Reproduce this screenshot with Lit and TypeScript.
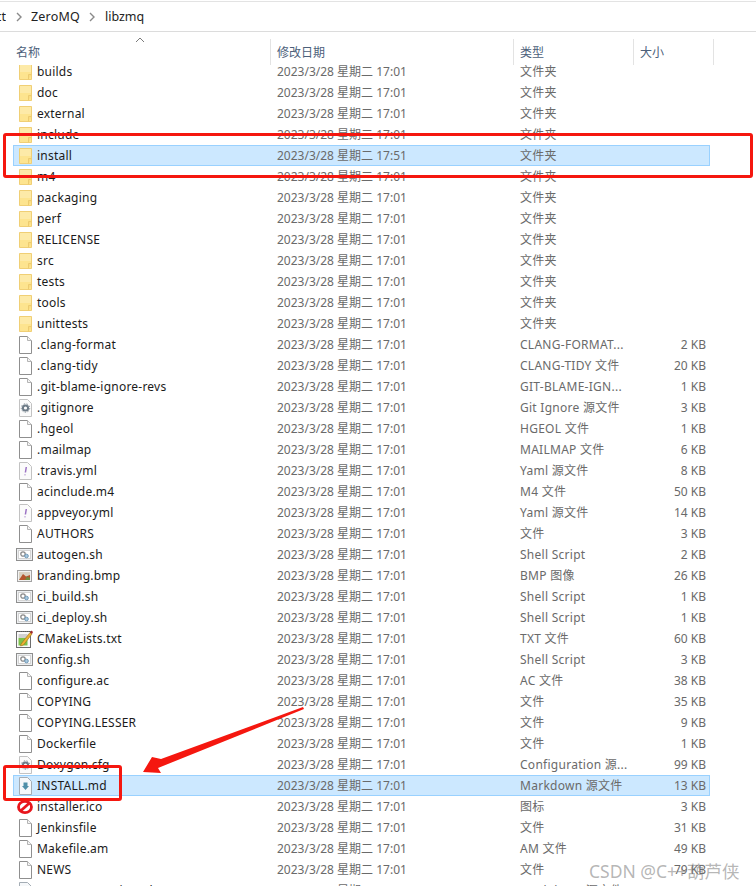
import { LitElement, html, css, svg } from "lit";
import { customElement } from "lit/decorators.js";

type Kind = "folder" | "file" | "gear" | "yml" | "sh" | "bmp" | "txt" | "md" | "ico";
interface Row { n: string; t: string; s?: string; k: Kind; d?: string; sel?: boolean; }

const F = "文件夹";
const SH = "Shell Script";
const rows: Row[] = [
  ...["builds", "doc", "external", "include"].map((n) => ({ n, t: F, k: "folder" as Kind })),
  { n: "install", t: F, k: "folder", d: "17:51", sel: true },
  ...["m4", "packaging", "perf", "RELICENSE", "src", "tests", "tools", "unittests"].map((n) => ({ n, t: F, k: "folder" as Kind })),
  { n: ".clang-format", t: "CLANG-FORMAT...", s: "2 KB", k: "file" },
  { n: ".clang-tidy", t: "CLANG-TIDY 文件", s: "20 KB", k: "file" },
  { n: ".git-blame-ignore-revs", t: "GIT-BLAME-IGN...", s: "1 KB", k: "file" },
  { n: ".gitignore", t: "Git Ignore 源文件", s: "3 KB", k: "gear" },
  { n: ".hgeol", t: "HGEOL 文件", s: "1 KB", k: "file" },
  { n: ".mailmap", t: "MAILMAP 文件", s: "6 KB", k: "file" },
  { n: ".travis.yml", t: "Yaml 源文件", s: "8 KB", k: "yml" },
  { n: "acinclude.m4", t: "M4 文件", s: "50 KB", k: "file" },
  { n: "appveyor.yml", t: "Yaml 源文件", s: "14 KB", k: "yml" },
  { n: "AUTHORS", t: "文件", s: "3 KB", k: "file" },
  { n: "autogen.sh", t: SH, s: "2 KB", k: "sh" },
  { n: "branding.bmp", t: "BMP 图像", s: "26 KB", k: "bmp" },
  { n: "ci_build.sh", t: SH, s: "1 KB", k: "sh" },
  { n: "ci_deploy.sh", t: SH, s: "1 KB", k: "sh" },
  { n: "CMakeLists.txt", t: "TXT 文件", s: "60 KB", k: "txt" },
  { n: "config.sh", t: SH, s: "3 KB", k: "sh" },
  { n: "configure.ac", t: "AC 文件", s: "38 KB", k: "file" },
  { n: "COPYING", t: "文件", s: "35 KB", k: "file" },
  { n: "COPYING.LESSER", t: "文件", s: "9 KB", k: "file" },
  { n: "Dockerfile", t: "文件", s: "1 KB", k: "file" },
  { n: "Doxygen.cfg", t: "Configuration 源...", s: "99 KB", k: "gear" },
  { n: "INSTALL.md", t: "Markdown 源文件", s: "13 KB", k: "md", sel: true },
  { n: "installer.ico", t: "图标", s: "3 KB", k: "ico" },
  { n: "Jenkinsfile", t: "文件", s: "31 KB", k: "file" },
  { n: "Makefile.am", t: "AM 文件", s: "49 KB", k: "file" },
  { n: "NEWS", t: "文件", s: "79 KB", k: "file" },
  { n: "README.cygwin.md", t: "Markdown 源文件", s: "2 KB", k: "md" },
];

const page = svg`<path d="M3.5 1.5H11.5L15.5 5.5V18.5H3.5Z" fill="#fff" stroke="#8f8f8f"/><path d="M11.5 1.5V5.5H15.5" fill="#f4f4f4" stroke="#b4b4b4"/>`;
const lightPage = svg`<path d="M3.5 1.5H11.5L15.5 5.5V18.5H3.5Z" fill="#fbfbfb" stroke="#c2c2c2"/>`;
const card = svg`<rect x="0.5" y="3.5" width="16" height="12" fill="#eef0f2" stroke="#8e8e8e"/><rect x="2.5" y="5.5" width="12" height="8" fill="#fff" stroke="#d4d4d4"/>`;

function icon(k: Kind) {
  let body;
  switch (k) {
    case "folder":
      body = svg`<path d="M3.5 2.5H15.5V17.5H3.5Z" fill="#fde48f" stroke="#f0cf75"/><path d="M4 3H15V10H4Z" fill="#fdeaa8"/><path d="M12.5 17.5V12.5H15.5" fill="#fbdc80" stroke="#eccb70"/>`;
      break;
    case "file":
      body = page;
      break;
    case "gear":
      body = svg`${lightPage}<circle cx="9.5" cy="10" r="2.6" fill="none" stroke="#6c7a86" stroke-width="2"/><circle cx="9.5" cy="10" r="4.2" fill="none" stroke="#7f8a94" stroke-width="1" stroke-dasharray="1.5 1.4"/>`;
      break;
    case "yml":
      body = svg`${lightPage}<path d="M10.3 6L9.4 11.5M9 13.5V14.2" stroke="#9b72c4" stroke-width="1.5" fill="none"/>`;
      break;
    case "sh":
      body = svg`${card}<circle cx="7" cy="9" r="2.2" fill="none" stroke="#8a8a8a" stroke-width="1.3"/><circle cx="10.5" cy="11" r="1.8" fill="#a9c8de" stroke="#6f99b8"/>`;
      break;
    case "bmp":
      body = svg`<rect x="1.5" y="4.5" width="14" height="11" fill="#f2f2f2" stroke="#a3a3a3"/><rect x="3" y="6" width="11" height="8" fill="#d9d2c4"/><path d="M3 14L7 8L10 10.5L14 9V14Z" fill="#b5562e"/><path d="M9 14L11 10.5L14 12V14Z" fill="#6f8a3e"/>`;
      break;
    case "txt":
      body = svg`<rect x="0.5" y="2.5" width="14" height="16" fill="#fafafa" stroke="#6e6e6e"/><path d="M1 2.5H14" stroke="#555" stroke-dasharray="1 1" fill="none"/><rect x="2.5" y="9" width="9" height="7.5" fill="#7cc24a"/><path d="M2.5 6H11.5M2.5 8H11.5" stroke="#a8a8a8"/><path d="M5 15L14 3.5L16 5L7.5 16L4.5 17Z" fill="#edb132" stroke="#9a6f1a" stroke-width=".6"/><path d="M14 3.5L15.5 1.5L17 3L16 5Z" fill="#a3272a"/>`;
      break;
    case "md":
      body = svg`<path d="M3.5 1.5H11.5L15.5 5.5V18.5H3.5Z" fill="#f6f8fa" stroke="#a4adb5"/><path d="M7.5 6.5H11.5V10H13L9.5 14L6 10H7.5Z" fill="#4f8fa8"/>`;
      break;
    case "ico":
      body = svg`<ellipse cx="9" cy="10" rx="6.5" ry="5.6" fill="#fff" stroke="#e8161c" stroke-width="2.8"/><path d="M4 14.5L14 5.5" stroke="#e8161c" stroke-width="2.8" fill="none"/>`;
      break;
  }
  return html`<svg class="ico" viewBox="0 0 18 20" width="18" height="20">${body}</svg>`;
}

@customElement("app-root")
export class AppRoot extends LitElement {
  static styles = css`
    :host {
      display: block;
      width: 756px;
      height: 890px;
      position: relative;
      overflow: hidden;
      background: #fff;
      font-family: "Noto Sans", "Noto Sans CJK SC", sans-serif;
      font-size: 12px;
    }
    .crumbs {
      height: 29px;
      margin-top: 1px;
      border-top: 1px solid #e3e3e3;
      border-bottom: 1px solid #dcdcdc;
      display: flex;
      align-items: center;
      font-size: 12.5px;
      color: #222;
      white-space: nowrap;
    }
    .crumbs .cut { width: 6px; overflow: hidden; direction: rtl; }
    .chev { width: 25px; display: flex; justify-content: center; }
    .z { letter-spacing: 0.2px; }
    .head {
      display: grid;
      grid-template-columns: 258px 243px 120px 80px;
      margin: 7px 0 0 13px;
      height: 26px;
      position: relative;
      color: #4c607a;
    }
    .hc {
      border-right: 1px solid #e3e3e3;
      padding: 7px 0 0 6px;
      line-height: 14px;
    }
    .hc:first-child { padding-left: 3px; }
    .sort { position: absolute; left: 122px; top: -2px; }
    .list {
      height: 821px;
      overflow: hidden;
    }
    .inner { margin-top: -4px; }
    .row {
      display: grid;
      grid-template-columns: 257px 243px 120px 73px;
      margin: 0 46px 0 13px;
      height: 21px;
      box-sizing: border-box;
      align-items: center;
      line-height: 21px;
      color: #6a6a6a;
      white-space: nowrap;
    }
    .row.sel {
      background: #cce8ff;
      outline: 1px solid #99d1ff;
      outline-offset: -1px;
    }
    .name { display: flex; align-items: center; color: #1b1b1b; letter-spacing: 0.22px; }
    .ico { margin: 0 3px 0 3px; flex: none; }
    .date { padding-left: 7px; }
    .type { padding-left: 7px; letter-spacing: 0.27px; }
    .size { text-align: right; }
    .mark {
      position: absolute;
      border: 3px solid #f5170f;
      border-radius: 3px;
      box-sizing: border-box;
    }
    .m1 { left: 3px; top: 133px; width: 750px; height: 45px; }
    .m2 { left: 3px; top: 765px; width: 119px; height: 36px; }
    .arrow { position: absolute; left: 0; top: 0; pointer-events: none; }
    .wm {
      position: absolute;
      left: 589px;
      top: 859px;
      font-size: 17.5px;
      line-height: 24px;
      color: rgba(120, 120, 120, 0.55);
      white-space: nowrap;
    }
  `;

  render() {
    const sep = html`<span class="chev"><svg width="6" height="10" viewBox="0 0 6 10"><path d="M1 1L5 5L1 9" fill="none" stroke="#8a8a8a" stroke-width="1.4"/></svg></span>`;
    return html`
      <div class="crumbs">
        <span class="cut">ct</span>${sep}<span class="z">ZeroMQ</span>${sep}<span>libzmq</span>
      </div>
      <div class="head">
        <div class="hc">名称</div><div class="hc">修改日期</div><div class="hc">类型</div><div class="hc">大小</div>
        <svg class="sort" width="10" height="6" viewBox="0 0 10 6"><path d="M1 5L5 1L9 5" fill="none" stroke="#7a7a7a"/></svg>
      </div>
      <div class="list"><div class="inner">
        ${rows.map((r) => html`
          <div class="row ${r.sel ? "sel" : ""}">
            <div class="name">${icon(r.k)}<span>${r.n}</span></div>
            <div class="date">2023/3/28 星期二 ${r.d ?? "17:01"}</div>
            <div class="type">${r.t}</div>
            <div class="size">${r.s ?? ""}</div>
          </div>`)}
      </div></div>
      <div class="mark m1"></div>
      <div class="mark m2"></div>
      <svg class="arrow" width="756" height="890" viewBox="0 0 756 890">
        <path d="M303 707L161 759L152 757L143 772L161 773L158 768L304 709Z" fill="#f5170f"/>
      </svg>
      <div class="wm">CSDN @C++葫芦侠</div>
    `;
  }
}
